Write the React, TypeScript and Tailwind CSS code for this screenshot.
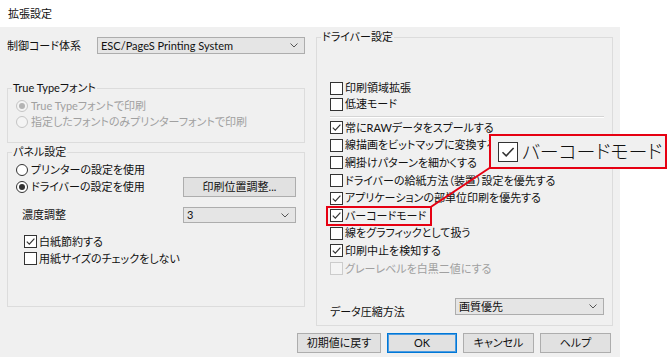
import React from "react";

type CheckProps = {
  label: string;
  checked?: boolean;
  disabled?: boolean;
  className?: string;
};

function CheckMark({ size = 13, color = "#333" }: { size?: number; color?: string }) {
  return (
    <svg width={size - 2} height={size - 2} viewBox="0 0 11 11" fill="none">
      <polyline points="1.8,5.6 4.3,8.1 9.4,2.6" stroke={color} strokeWidth="1.2" />
    </svg>
  );
}

function Check({ label, checked, disabled, className = "h-[17.6px]" }: CheckProps) {
  return (
    <div className={`flex items-center gap-[2px] ${className}`}>
      <span
        className={`flex h-[13px] w-[13px] shrink-0 items-center justify-center border ${
          disabled ? "border-[#cccccc] bg-[#f4f4f4]" : "border-[#333333] bg-white"
        }`}
      >
        {checked && <CheckMark />}
      </span>
      <span className={`whitespace-nowrap ${disabled ? "text-[#a0a0a0]" : ""}`}>{label}</span>
    </div>
  );
}

function Radio({ label, checked, disabled }: { label: string; checked?: boolean; disabled?: boolean }) {
  return (
    <div className="flex items-center gap-[3px]">
      <span
        className={`flex h-[12px] w-[12px] shrink-0 items-center justify-center rounded-full border ${
          disabled ? "border-[#c4c4c4] bg-[#f4f4f4]" : "border-[#333333] bg-white"
        }`}
      >
        {checked && (
          <span
            className={`h-[6px] w-[6px] rounded-full ${disabled ? "bg-[#b4b4b4]" : "bg-[#333333]"}`}
          />
        )}
      </span>
      <span className={`whitespace-nowrap ${disabled ? "text-[#a0a0a0]" : ""}`}>{label}</span>
    </div>
  );
}

function Combo({ value, className }: { value: string; className: string }) {
  return (
    <div
      className={`flex items-center justify-between border border-[#adadad] bg-[#e5e5e5] pl-[3px] pr-[6px] ${className}`}
    >
      <span className="whitespace-nowrap">{value}</span>
      <svg width="8" height="5" viewBox="0 0 8 5" fill="none">
        <polyline points="0.5,0.5 4,4 7.5,0.5" stroke="#555" strokeWidth="1" />
      </svg>
    </div>
  );
}

function Btn({ label, className, primary }: { label: string; className: string; primary?: boolean }) {
  return (
    <div
      className={`flex h-[20px] items-center justify-center border bg-[#e1e1e1] ${
        primary ? "border-[#0078d7] shadow-[inset_0_0_0_1px_#4c9be0]" : "border-[#adadad]"
      } ${className}`}
    >
      {label}
    </div>
  );
}

export default function App() {
  return (
    <div className="relative h-[359px] w-[670px] overflow-hidden bg-white text-[11px] leading-[14px] text-[#111] [font-family:Lato,'Noto_Sans_CJK_JP',sans-serif] [font-feature-settings:'palt']">
      <div className="flex h-[27px] items-center pl-[8px]">拡張設定</div>

      <div className="flex h-[330px] w-[620px] flex-col bg-[#f0f0f0]">
        <div className="flex pl-[7px] pt-[3px]">
          {/* left column */}
          <div className="flex w-[298px] flex-col pt-[7px]">
            <div className="flex h-[17px] items-center">
              <span className="w-[90px]">制御コード体系</span>
              <Combo value="ESC/PageS Printing System" className="h-[17px] w-[208px]" />
            </div>

            <fieldset className="mt-[27px] h-[62px] border border-[#dcdcdc]">
              <legend className="ml-[4px] px-[1px] leading-[14px]">True Typeフォント</legend>
              <div className="flex flex-col pl-[8px] pt-[3px]">
                <div className="flex h-[16px] items-center">
                  <Radio label="True Typeフォントで印刷" checked disabled />
                </div>
                <div className="flex h-[16px] items-center">
                  <Radio label="指定したフォントのみプリンターフォントで印刷" disabled />
                </div>
              </div>
            </fieldset>

            <fieldset className="mt-[2px] h-[162px] border border-[#dcdcdc]">
              <legend className="ml-[4px] px-[1px] leading-[14px]">パネル設定</legend>
              <div className="flex flex-col pl-[8px] pr-[8px] pt-[3px]">
                <div className="flex h-[15px] items-center">
                  <Radio label="プリンターの設定を使用" />
                </div>
                <div className="flex h-[20px] items-center justify-between">
                  <Radio label="ドライバーの設定を使用" checked />
                  <Btn label="印刷位置調整..." className="w-[113px]" />
                </div>
                <div className="mt-[10px] flex h-[16px] items-center justify-between">
                  <span className="ml-[6px]">濃度調整</span>
                  <Combo value="3" className="h-[16px] w-[113px]" />
                </div>
                <div className="mt-[10px] flex flex-col pl-[8px]">
                  <Check label="白紙節約する" checked className="h-[17px]" />
                  <Check label="用紙サイズのチェックをしない" className="h-[17px]" />
                </div>
              </div>
            </fieldset>
          </div>

          {/* right column */}
          <fieldset className="ml-[11px] h-[296px] w-[297px] border border-[#dcdcdc]">
            <legend className="ml-[4px] px-[1px] leading-[14px]">ドライバー設定</legend>
            <div className="flex flex-col pl-[13px] pt-[36px]">
              <Check label="印刷領域拡張" className="h-[16px]" />
              <Check label="低速モード" className="h-[16px]" />
              <div className="mr-[8px] mt-[4px] h-[2px] border-t border-b border-t-[#d5d5d5] border-b-white" />
              <div className="mt-[1px] flex flex-col">
                <Check label="常にRAWデータをスプールする" checked />
                <Check label="線描画をビットマップに変換する" />
                <Check label="網掛けパターンを細かくする" />
                <Check label="ドライバーの給紙方法（装置）設定を優先する" />
                <Check label="アプリケーションの部単位印刷を優先する" checked />
                <Check label="バーコードモード" checked />
                <Check label="線をグラフィックとして扱う" />
                <Check label="印刷中止を検知する" checked />
                <Check label="グレーレベルを白黒二値にする" disabled />
              </div>
              <div className="mt-[21px] flex items-start">
                <span className="mt-[7px] w-[125px]">データ圧縮方法</span>
                <Combo value="画質優先" className="h-[17px] w-[149px]" />
              </div>
            </div>
          </fieldset>
        </div>

        <div className="mt-[7px] flex justify-end gap-[6px] pr-[9px]">
          <Btn label="初期値に戻す" className="w-[84px]" />
          <Btn label="OK" className="w-[70px]" primary />
          <Btn label="キャンセル" className="w-[71px]" />
          <Btn label="ヘルプ" className="w-[71px]" />
        </div>
      </div>

      {/* callout overlay */}
      <svg className="absolute left-0 top-0" width="670" height="359" viewBox="0 0 670 359">
        <line x1="430" y1="207.5" x2="491" y2="167" stroke="#e60012" strokeWidth="2" />
      </svg>
      <div className="absolute left-[326px] top-[206px] h-[20px] w-[106px] border-2 border-[#e60012]" />
      <div className="absolute left-[489px] top-[134px] flex h-[35px] w-[178px] items-center gap-[4px] border-2 border-[#e60012] bg-[#f0f0f0] pl-[7px]">
        <span className="flex h-[20px] w-[20px] items-center justify-center border border-[#333333] bg-white">
          <svg width="16" height="16" viewBox="0 0 16 16" fill="none">
            <polyline points="2.5,8.2 6.2,11.8 13.6,4" stroke="#333" strokeWidth="1.6" />
          </svg>
        </span>
        <span className="whitespace-nowrap text-[19px] leading-[22px] font-light">バーコードモード</span>
      </div>
    </div>
  );
}
